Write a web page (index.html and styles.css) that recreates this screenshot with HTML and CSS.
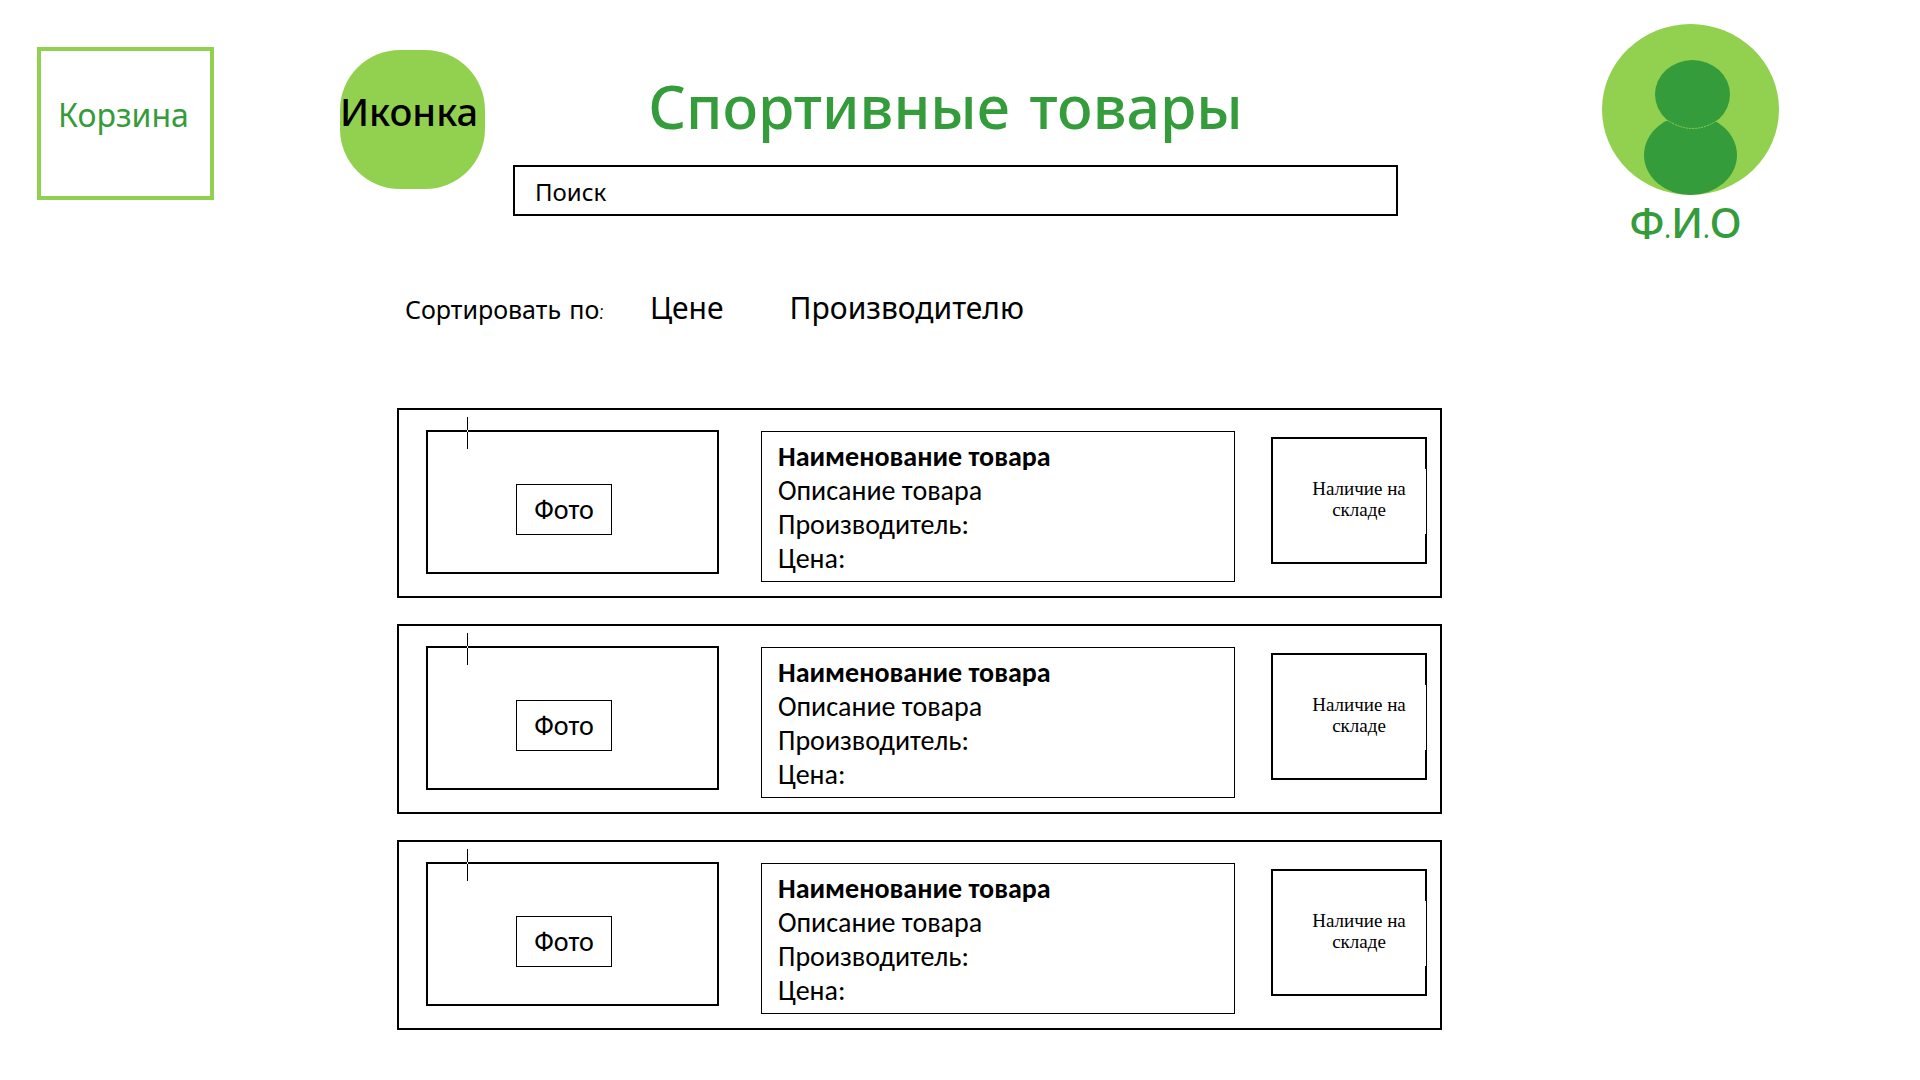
FILE: index.html
```html
<!DOCTYPE html>
<html lang="ru">
<head>
<meta charset="utf-8">
<meta name="viewport" content="width=device-width, initial-scale=1">
<title>Спортивные товары</title>
<link rel="stylesheet" href="styles.css">
</head>
<body>
<header class="header">
  <a class="cart" href="#cart">Корзина</a>
  <a class="logo" href="#home">Иконка</a>
  <div class="heading">
    <h1 class="title">Спортивные товары</h1>
    <input class="search" type="search" placeholder="Поиск" aria-label="Поиск">
  </div>
  <a class="profile" href="#profile">
    <svg class="avatar" viewBox="0 0 177 171" aria-hidden="true">
      <ellipse cx="88.5" cy="85.5" rx="88.5" ry="85.5" fill="#92d050"/>
      <ellipse cx="88.5" cy="131" rx="46.5" ry="40" fill="#359c3c"/>
      <ellipse cx="90.5" cy="70.5" rx="37.5" ry="34.5" fill="#359c3c"/>
      <path d="M65 96Q90.500 113 116 96" fill="none" stroke="#92d050" stroke-width="1" stroke-dasharray="2 1"/>
    </svg>
    <span class="profile-name">Ф.И.О</span>
  </a>
</header>
<main class="main">
  <div class="sort">
    <span class="sort-label">Сортировать по:</span>
    <button class="sort-option" type="button">Цене</button>
    <button class="sort-option" type="button">Производителю</button>
  </div>
  <section class="products">
    <article class="card">
      <div class="photo"><span class="photo-label">Фото</span></div>
      <div class="info">
        <h2 class="name">Наименование товара</h2>
        <p>Описание товара</p>
        <p>Производитель:</p>
        <p>Цена:</p>
      </div>
      <div class="stock"><p class="stock-text">Наличие на складе</p></div>
    </article>
    <article class="card">
      <div class="photo"><span class="photo-label">Фото</span></div>
      <div class="info">
        <h2 class="name">Наименование товара</h2>
        <p>Описание товара</p>
        <p>Производитель:</p>
        <p>Цена:</p>
      </div>
      <div class="stock"><p class="stock-text">Наличие на складе</p></div>
    </article>
    <article class="card">
      <div class="photo"><span class="photo-label">Фото</span></div>
      <div class="info">
        <h2 class="name">Наименование товара</h2>
        <p>Описание товара</p>
        <p>Производитель:</p>
        <p>Цена:</p>
      </div>
      <div class="stock"><p class="stock-text">Наличие на складе</p></div>
    </article>
  </section>
</main>
</body>
</html>
```
FILE: styles.css
```css
:root {
  --hand: "Comic Sans MS", "Comic Neue", "Noto Sans", sans-serif;
  --body: Calibri, Carlito, Lato, "Open Sans", sans-serif;
  --lime: #92d050;
  --green: #359c3c;
}

* {
  box-sizing: border-box;
  margin: 0;
}

body {
  background: #fff;
  color: #000;
  font-family: var(--body);
}

a {
  text-decoration: none;
}

.header {
  display: flex;
  align-items: flex-start;
  padding: 24px 141px 0 37px;
  font-family: var(--hand);
}

.cart {
  flex: none;
  width: 177px;
  height: 153px;
  margin: 23px 126px 0 0;
  padding: 44px 4px 0 0;
  border: 4px solid var(--lime);
  color: var(--green);
  font-size: 32px;
  line-height: 44px;
  text-align: center;
}

.logo {
  flex: none;
  width: 145px;
  height: 139px;
  margin: 26px 28px 0 0;
  padding-top: 42px;
  border-radius: 60px;
  background: var(--lime);
  color: #000;
  font-size: 38px;
  font-weight: 500;
  line-height: 44px;
}

.heading {
  flex: 1;
  margin-right: 204px;
}

.title {
  margin-top: 44px;
  padding-right: 20px;
  color: var(--green);
  font-size: 59px;
  font-weight: 500;
  line-height: 84px;
  text-align: center;
}

.search {
  display: block;
  width: 100%;
  height: 51px;
  margin-top: 13px;
  padding: 4px 20px 0;
  border: 2px solid #000;
  border-radius: 0;
  background: #fff;
  font-family: var(--hand);
  font-size: 24px;
  appearance: none;
}

.search::placeholder {
  color: #000;
  opacity: 1;
}

.profile {
  flex: none;
  width: 177px;
  color: var(--green);
  font-size: 42px;
  font-weight: 500;
  line-height: 60px;
  text-align: center;
}

.avatar {
  display: block;
  width: 100%;
  height: auto;
}

.profile-name {
  display: block;
  padding-right: 10px;
}

.main {
  display: grid;
  grid-template-columns: 397fr 1045fr 478fr;
}

.sort,
.products {
  grid-column: 2;
}

.sort {
  display: flex;
  align-items: baseline;
  margin-top: 33px;
  padding-left: 8px;
  font-family: var(--hand);
  line-height: 44px;
}

.sort-label {
  font-size: 25px;
  margin-right: 46px;
}

.sort-option {
  margin-right: 66px;
  padding: 0;
  border: 0;
  background: none;
  color: #000;
  font-family: inherit;
  font-size: 30px;
  line-height: 44px;
}

.products {
  display: grid;
  gap: 26px;
  margin-top: 75px;
}

.card {
  display: flex;
  align-items: flex-start;
  padding: 20px 13px 14px 27px;
  border: 2px solid #000;
}

.photo {
  position: relative;
  display: flex;
  flex: 1 1 293px;
  align-items: center;
  justify-content: center;
  height: 144px;
  padding: 15px 17px 0 0;
  border: 2px solid #000;
}

/* thin crosshair mark over the frame's top edge */
.photo::before {
  content: "";
  position: absolute;
  top: -15px;
  left: 39px;
  width: 1px;
  height: 32px;
  background: linear-gradient(#000 13px, #fff 13px 15px, #000 15px);
}

.photo-label {
  padding: 0 17px;
  border: 1px solid #000;
  font-size: 28px;
  line-height: 49px;
}

.info {
  flex: 1 1 474px;
  margin: 1px 0 0 42px;
  padding: 8px 16px 5px;
  border: 1px solid #000;
  font-size: 28px;
  line-height: 34px;
}

.name {
  font-size: 28px;
  font-weight: 700;
}

.stock {
  position: relative;
  display: flex;
  flex: 1 1 156px;
  align-items: center;
  height: 127px;
  margin: 7px 0 0 36px;
  padding: 0 0 4px 20px;
  border: 2px solid #000;
}

.stock::after {
  content: "";
  position: absolute;
  top: 30px;
  right: -1px;
  width: 1px;
  height: 65px;
  background: #fff;
}

.stock-text {
  flex: 1;
  padding: 0 14px;
  font-family: "Liberation Serif", serif;
  font-size: 19px;
  line-height: 21px;
  text-align: center;
}
```
